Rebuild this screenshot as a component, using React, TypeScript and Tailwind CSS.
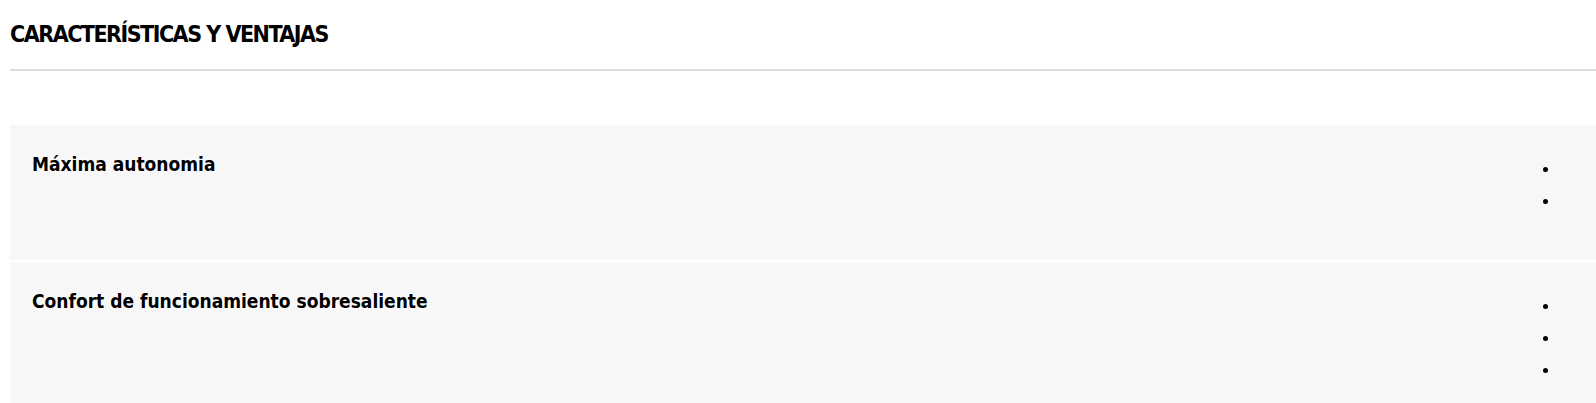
const features = [
  { title: "Máxima autonomia", items: 2 },
  { title: "Confort de funcionamiento sobresaliente", items: 3 },
]

function App() {
  return (
    <div className="min-h-screen bg-white pl-[10px] font-['DejaVu_Sans',sans-serif] font-stretch-condensed text-black">
      <div className="border-b-2 border-[#dedede] pt-[19px] pb-[19px]">
        <h2 className="text-[23px] leading-[31px] font-bold tracking-[-1.5px] [text-shadow:0_0_6px_#fff,0_0_2px_#fff]">
          CARACTERÍSTICAS Y VENTAJAS
        </h2>
      </div>

      <div className="mt-[54px] flex flex-col gap-[2px]">
        {features.map((f) => (
          <div key={f.title} className="flex justify-between bg-[#f7f7f7] pl-[22px] pr-[35px] pt-[27px] pb-[42px]">
            <h3 className="text-[19px] leading-[24px] font-semibold [text-shadow:0_0_8px_#fff,0_0_3px_#fff]">
              {f.title}
            </h3>
            <ul className="list-disc pl-[16px] pt-[2px] text-[14px] leading-[32px] marker:text-[16px]">
              {Array.from({ length: f.items }).map((_, i) => (
                <li key={i} className="w-[1px]">&nbsp;</li>
              ))}
            </ul>
          </div>
        ))}
      </div>
    </div>
  )
}

export default App
